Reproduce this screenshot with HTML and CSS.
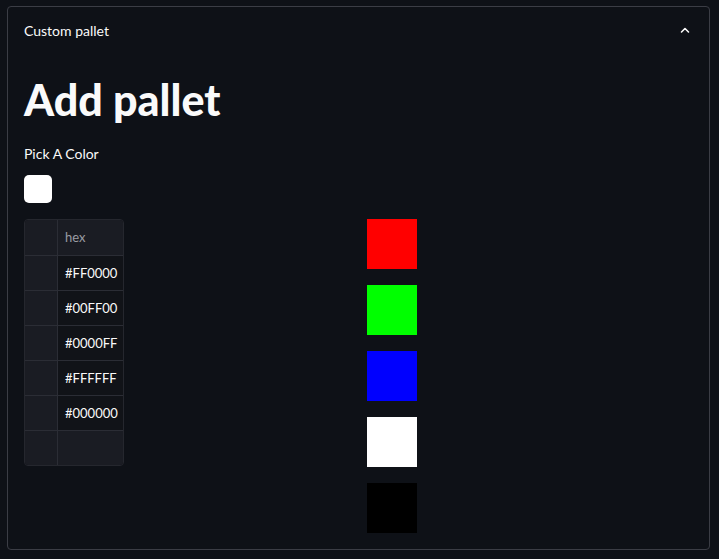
FILE: index.html
```html
<!DOCTYPE html>
<html>
<head>
<meta charset="utf-8">
<link rel="stylesheet" href="styles.css">
</head>
<body>
<div class="expander">
  <div class="exp-header">
    <span class="exp-title">Custom pallet</span>
    <svg class="chev" width="12" height="12" viewBox="0 0 12 12"><path d="M2.5 8 L6 4.5 L9.5 8" fill="none" stroke="#fafafa" stroke-width="1.6" stroke-linecap="round" stroke-linejoin="round"/></svg>
  </div>
  <div class="exp-body">
    <h1 class="title">Add pallet</h1>
    <div class="label">Pick A Color</div>
    <div class="picker"></div>
    <div class="cols">
      <div class="col">
        <div class="table">
          <div class="row head"><div class="idx"></div><div class="cell hdr">hex</div></div>
          <div class="row"><div class="idx"></div><div class="cell">#FF0000</div></div>
          <div class="row"><div class="idx"></div><div class="cell">#00FF00</div></div>
          <div class="row"><div class="idx"></div><div class="cell">#0000FF</div></div>
          <div class="row"><div class="idx"></div><div class="cell">#FFFFFF</div></div>
          <div class="row"><div class="idx"></div><div class="cell">#000000</div></div>
          <div class="row empty"><div class="idx"></div><div class="cell"></div></div>
        </div>
      </div>
      <div class="col swatches">
        <div class="sw red"></div>
        <div class="sw green"></div>
        <div class="sw blue"></div>
        <div class="sw white"></div>
        <div class="sw black"></div>
      </div>
    </div>
  </div>
</div>
</body>
</html>
```
FILE: styles.css
```css
html, body {
  margin: 0;
  padding: 0;
  background: #0e1117;
  color: #fafafa;
  font-family: Lato, "Noto Sans", sans-serif;
}
body {
  padding: 6px 9px 0 7px;
}
.expander {
  border: 1px solid #3b3d45;
  border-radius: 4px;
  height: 544px;
  box-sizing: border-box;
}
.exp-header {
  display: flex;
  align-items: center;
  justify-content: space-between;
  height: 46px;
  padding: 0 18px 0 16px;
}
.exp-title {
  font-size: 14px;
}
.chev {
  display: block;
}
.exp-body {
  padding: 0 16px;
}
.title {
  margin: 0;
  font-size: 43px;
  font-weight: 900;
  line-height: 1.2;
  padding: 21px 0 18px;
  letter-spacing: 0;
}
.label {
  font-size: 14px;
  line-height: 20px;
  height: 20px;
  margin-bottom: 11px;
  margin-top: 0;
}
.picker {
  width: 28px;
  height: 28px;
  border-radius: 5px;
  background: #ffffff;
  margin-bottom: 16px;
}
.cols {
  display: grid;
  grid-template-columns: 1fr 1fr;
  column-gap: 16px;
}
.table {
  width: 100px;
  border: 1px solid #25272e;
  border-radius: 4px;
  overflow: hidden;
  box-sizing: border-box;
}
.row {
  display: flex;
  height: 35px;
  border-top: 1px solid #2b2d35;
  box-sizing: border-box;
}
.row.head {
  border-top: none;
  height: 35px;
}
.idx {
  width: 33px;
  background: #1a1c23;
  border-right: 1px solid #2b2d35;
  box-sizing: border-box;
  flex: none;
}
.cell {
  flex: 1;
  background: #111318;
  font-size: 13px;
  display: flex;
  align-items: center;
  padding-left: 7px;
  color: #fafafa;
}
.cell.hdr {
  background: #1a1c23;
  color: #9a9ca3;
}
.row.empty .cell {
  background: #1a1c23;
}
.swatches {
  display: flex;
  flex-direction: column;
  gap: 16px;
}
.sw {
  width: 50px;
  height: 50px;
}
.red { background: #ff0000; }
.green { background: #00ff00; }
.blue { background: #0000ff; }
.white { background: #ffffff; }
.black { background: #000000; }
```
